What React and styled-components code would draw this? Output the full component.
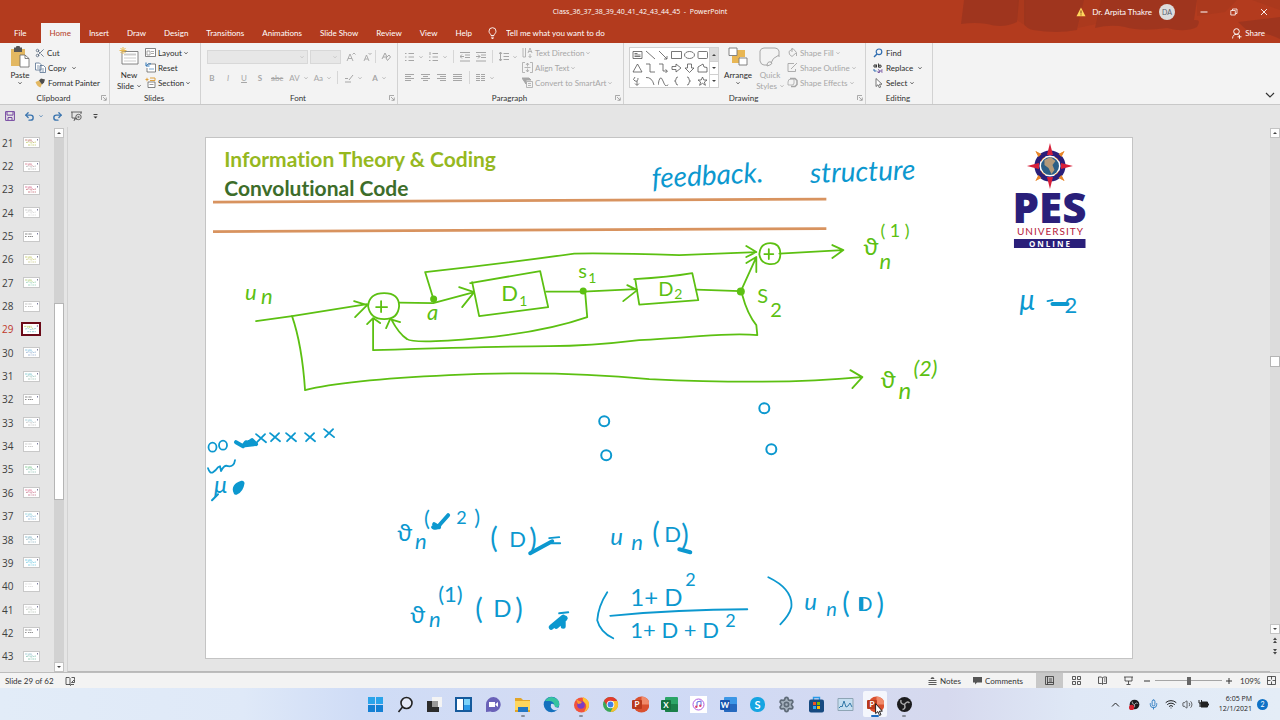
import React from "react";
import styled, { createGlobalStyle } from "styled-components";
import { Scissors, Undo2, Redo2, Wifi, Volume2, Mic, Settings } from "lucide-react";

const color = {
  brand: "#b33b1e",
  ribbon: "#f3f3f3",
  workspace: "#e5e5e5",
  line: "#c8c8c8",
  text: "#333333",
  disabled: "#a6a6a6",
  green: "#5cc012",
  blue: "#0c98cf",
  navy: "#2a1f7a"
};

const GlobalStyle = createGlobalStyle`
  * { box-sizing: border-box; }
  body { margin: 0; background: ${color.workspace}; }
  button, input, select { font: inherit; color: inherit; }
  button { border: 0; padding: 0; background: none; }
  svg { display: block; flex: none; }
`;

const Page = styled.div`
  display: flex;
  flex-direction: column;
  min-height: 100vh;
  color: ${color.text};
  font-family: Lato, "Open Sans", "Noto Sans", sans-serif;
  font-size: 8px;
  line-height: 12px;
`;

const Icon = styled.svg`
  width: ${props => props.w || 12}px;
  height: ${props => props.h || props.w || 12}px;
  fill: none;
  stroke: currentColor;
`;

/* ---------- title bar and tabs ---------- */

const Header = styled.header`
  position: relative;
  background: ${color.brand};
  color: #fff;
`;

const Smudges = styled.svg`
  position: absolute;
  top: 0;
  right: 0;
  width: 330px;
  height: 42px;
`;

const TitleBar = styled.div`
  position: relative;
  display: grid;
  grid-template-columns: 1fr auto 1fr;
  align-items: center;
  height: 23px;
`;

const Title = styled.h1`
  margin: 0;
  font-family: "Open Sans", "Noto Sans", sans-serif;
  font-size: 7px;
  font-weight: 400;
`;

const Account = styled.div`
  display: flex;
  align-items: center;
  justify-content: flex-end;
  padding-right: 9px;
`;

const Warning = styled(Icon)`
  margin-right: 6px;
`;

const Avatar = styled.span`
  width: 16px;
  height: 16px;
  margin: 0 14px 0 7px;
  border-radius: 50%;
  background: #dcdcdc;
  color: #55606c;
  font-size: 7px;
  line-height: 16px;
  text-align: center;
`;

const WindowButton = styled.button`
  display: flex;
  justify-content: center;
  width: 30px;
  &:last-child { width: 14px; margin-left: 8px; }
`;

const TabBar = styled.nav`
  position: relative;
  display: flex;
  align-items: stretch;
  height: 20px;
  padding-right: 15px;
`;

const Tab = styled.button`
  padding: 0 9px;
  background: ${props => (props.$active ? color.ribbon : "none")};
  color: ${props => (props.$active ? color.brand : "#fff")};
  &:first-child { padding: 0 14px; }
`;

const TellMe = styled.label`
  display: flex;
  align-items: center;
  flex: 1;
  gap: 9px;
  padding-left: 7px;
`;

const TellInput = styled.input`
  width: 140px;
  padding: 0;
  border: 0;
  background: none;
  outline: none;
  &::placeholder { color: #fff; opacity: 1; }
`;

const Share = styled.button`
  display: flex;
  align-items: center;
  gap: 3px;
`;

/* ---------- ribbon ---------- */

const Ribbon = styled.div`
  display: flex;
  height: 62px;
  background: ${color.ribbon};
  border-bottom: 1px solid ${color.line};
`;

const Group = styled.section`
  display: flex;
  flex-direction: column;
  flex: none;
  width: ${props => props.$width}px;
  padding-top: 2px;
  border-right: 1px solid #d2d2d2;
`;

const GroupBody = styled.div`
  display: flex;
  flex: 1;
  min-height: 0;
  padding: 0 0 0 ${props => props.$left || 6}px;
`;

const GroupFoot = styled.div`
  display: grid;
  grid-template-columns: 1fr auto 1fr;
  align-items: center;
  height: 12px;
  padding-right: 2px;
  svg { justify-self: end; color: #8a8a8a; }
`;

const GroupName = styled.h2`
  grid-column: 2;
  margin: 0;
  font-size: 8px;
  font-weight: 400;
`;

const Stack = styled.div`
  display: flex;
  flex-direction: column;
  margin-left: ${props => props.$left || 0}px;
  padding-top: ${props => props.$top || 0}px;
`;

const Command = styled.button`
  display: flex;
  align-items: center;
  gap: ${props => props.$gap || 2}px;
  height: 15px;
  white-space: nowrap;
  color: ${props => (props.disabled ? color.disabled : "#2b2b2b")};
`;

const BigCommand = styled.button`
  display: flex;
  flex-direction: column;
  align-items: center;
  width: ${props => props.$width || 28}px;
  padding-top: 1px;
  line-height: 11px;
  color: ${props => (props.disabled ? color.disabled : "#2b2b2b")};
  svg { margin-bottom: 2px; }
`;

const Line = styled.span`
  display: flex;
  align-items: center;
  gap: 3px;
`;

const ToolRow = styled.div`
  display: flex;
  align-items: center;
  gap: ${props => props.$gap}px;
  height: 21px;
  color: ${color.disabled};
`;

const FontSelect = styled.select`
  appearance: none;
  width: ${props => props.$width}px;
  height: 14px;
  margin-right: 1px;
  padding: 0;
  border: 1px solid #cdcdcd;
  border-radius: 0;
  background: #e3e3e3 url("data:image/svg+xml,%3Csvg xmlns='http://www.w3.org/2000/svg' width='4' height='4'%3E%3Cpath d='M.5 1.300 2 2.800 3.500 1.300' fill='none' stroke='%23aaa' stroke-width='.8'/%3E%3C/svg%3E") right 3px center no-repeat;
`;

const FormatButton = styled.button`
  display: flex;
  align-items: center;
  justify-content: center;
  gap: 4px;
  min-width: ${props => props.$width || 10}px;
  color: ${color.disabled};
  font-weight: ${props => (props.$bold ? 700 : 400)};
  font-style: ${props => (props.$italic ? "italic" : "normal")};
  text-decoration: ${props => props.$line || "none"};
`;

const Divider = styled.i`
  width: 1px;
  height: 13px;
  background: #d6d6d6;
`;

const ShapeGallery = styled.div`
  display: flex;
  height: 41px;
  margin-top: 2px;
  border: 1px solid #d0d0d0;
  background: #fff;
`;

const ShapeGrid = styled.div`
  display: grid;
  grid-template-columns: repeat(6, 13px);
  grid-template-rows: repeat(3, 13px);
  place-items: center;
  padding-left: 1px;
`;

const GalleryScroll = styled.div`
  display: grid;
  grid-template-rows: 1fr 1fr 1fr;
  width: 9px;
  border-left: 1px solid #d0d0d0;
`;

const GalleryButton = styled.button`
  display: grid;
  place-items: center;
  background: ${props => (props.disabled ? "#dcdcdc" : "#fff")};
  & + & { border-top: 1px solid #d0d0d0; }
`;

const RibbonEnd = styled.div`
  display: flex;
  flex: 1;
  align-items: flex-end;
  justify-content: flex-end;
  padding: 0 5px 4px 0;
`;

const QuickAccess = styled.div`
  display: flex;
  align-items: center;
  height: 22px;
  padding-left: 5px;
  background: ${color.workspace};
`;

const QuickButton = styled.button`
  display: flex;
  align-items: center;
  justify-content: center;
  gap: 4px;
  width: ${props => props.$width || 20}px;
  color: ${props => props.$tint || "#444"};
`;

/* ---------- workspace ---------- */

const Workspace = styled.main`
  display: flex;
  flex: 1;
  background: ${color.workspace};
`;

const Thumbs = styled.ol`
  display: flex;
  flex-direction: column;
  width: 54px;
  margin: 0;
  padding: 4px 0;
  list-style: none;
`;

const ThumbItem = styled.li`
  display: flex;
  align-items: center;
  flex: 1;
  color: ${props => (props.$active ? "#c0392b" : "#404040")};
  font-family: "Open Sans", "Noto Sans", sans-serif;
  font-size: 10px;
`;

const ThumbButton = styled.button`
  display: flex;
  align-items: center;
  width: 100%;
  text-align: left;
`;

const ThumbNumber = styled.span`
  width: ${props => (props.$active ? 21 : 23)}px;
  padding-left: 2px;
`;

const ThumbFrame = styled.span`
  background: #fff;
  border: ${props => (props.$active ? "2px solid #6b0a18" : "1px solid #c8c8c8")};
  svg { opacity: .7; }
`;

const Scroll = styled.div`
  display: flex;
  flex-direction: column;
  width: 10px;
  padding-top: 1px;
`;

const ScrollButton = styled.button`
  display: grid;
  place-items: center;
  height: ${props => (props.$plain ? 12 : 10)}px;
  border: 1px solid ${props => (props.$plain ? "transparent" : "#c3c3c3")};
  background: ${props => (props.$plain ? "none" : "#fdfdfd")};
`;

const Track = styled.div`
  flex: ${props => props.$grow};
  background: ${props => props.$tone};
`;

const Handle = styled.div`
  flex: ${props => props.$grow || "none"};
  min-height: 11px;
  border: 1px solid #b5b5b5;
  background: #fff;
`;

const Canvas = styled.div`
  flex: 1;
  margin-left: 3px;
  padding: 11px 0 12px;
  border-left: 1px solid #d2d2d2;
  border-bottom: 1px solid #b9b9b9;
`;

const Slide = styled.article`
  position: relative;
  width: 77%;
  margin: 0 auto;
  padding: 6px 18px;
  aspect-ratio: 925 / 520;
  background: #fff;
  box-shadow: 0 0 0 1px #c4c4c4;
`;

const SlideHeading = styled.h2`
  margin: 0;
  color: ${props => props.$tint};
  font-family: Lato, sans-serif;
  font-size: 21px;
  font-weight: 700;
  font-variant-ligatures: none;
  line-height: 29px;
`;

const Ink = styled.svg`
  position: absolute;
  inset: 0;
  width: 100%;
  height: 100%;
  fill: none;
  stroke-linecap: round;
  stroke-linejoin: round;
`;

const InkText = styled.text`
  fill: ${props => props.$tint};
  stroke: none;
  font-family: Lato, "DejaVu Sans", sans-serif;
  font-style: ${props => (props.$italic ? "italic" : "normal")};
  font-size: ${props => props.$size}px;
`;

const LogoName = styled.text`
  fill: ${color.navy};
  font: 800 42px "Open Sans", "Noto Sans", sans-serif;
  text-anchor: middle;
`;

const LogoLine = styled.text`
  font: 400 10px Lato, sans-serif;
  letter-spacing: 1px;
  text-anchor: middle;
`;

const LogoOnline = styled.text`
  fill: #fff;
  font: 700 8px "Open Sans", sans-serif;
  letter-spacing: 2px;
  text-anchor: middle;
`;

/* ---------- status bar and taskbar ---------- */

const Status = styled.footer`
  display: flex;
  align-items: center;
  height: 16px;
  border-top: 1px solid #bdbdbd;
  background: ${color.ribbon};
`;

const StatusButton = styled.button`
  display: flex;
  align-items: center;
  justify-content: center;
  gap: 3px;
  height: 15px;
  min-width: ${props => props.$width || 0}px;
  margin-right: ${props => props.$after || 0}px;
  background: ${props => (props.$active ? "#c8c8c8" : "none")};
`;

const StatusText = styled.span`
  margin: 0 11px 0 5px;
`;

const Spacer = styled.div`
  flex: 1;
`;

const Zoom = styled.input`
  appearance: none;
  width: 67px;
  height: 9px;
  margin: 0 2px;
  background: linear-gradient(#a5a5a5, #a5a5a5) center / 100% 1px no-repeat;
  &::-webkit-slider-thumb {
    appearance: none;
    width: 4px;
    height: 8px;
    background: #666;
  }
`;

const ZoomValue = styled.output`
  width: 33px;
  padding-left: 6px;
`;

const Taskbar = styled.div`
  display: grid;
  grid-template-columns: 1fr 558px 1fr;
  align-items: center;
  height: 32px;
  background: linear-gradient(90deg, #e2ecf8 0, #dfe9f8 19%, #cfdcf6 28%, #d3dbf3 45%, #cfdaf6 52%, #d6d9ee 74%, #dfe8f6 84%, #e4edf7 100%);
`;

const Apps = styled.div`
  grid-column: 2;
  display: flex;
`;

const AppSlot = styled.div`
  display: flex;
  flex: 1;
  justify-content: center;
`;

const AppButton = styled.button`
  position: relative;
  display: grid;
  place-items: center;
  width: 24px;
  height: 26px;
  border-radius: 2px;
  background: ${props => (props.$active ? "#f4f6fc" : "none")};
  &::after {
    content: "";
    position: absolute;
    bottom: 0;
    left: calc(50% - ${props => (props.$active ? 4 : 2)}px);
    width: ${props => (props.$active ? 8 : 4)}px;
    height: 2px;
    border-radius: 1px;
    background: ${props => (props.$active ? "#1c6cc0" : props.$running ? "#8a8f9c" : "transparent")};
  }
`;

const AppLetter = styled.text`
  fill: #fff;
  font: 700 8px Lato, sans-serif;
  text-anchor: middle;
`;

const SkypeLetter = styled(AppLetter)`
  font-size: 11px;
`;

const Pointer = styled.svg`
  position: absolute;
  left: 12px;
  top: 12px;
  width: 8px;
  height: 13px;
`;

const Tray = styled.div`
  display: flex;
  align-items: center;
  justify-content: flex-end;
  gap: 5px;
  padding-right: 12px;
  color: #222;
`;

const TrayItem = styled.span`
  display: grid;
  place-items: center;
  width: 14px;
`;

const Clock = styled.time`
  width: 38px;
  font-family: "Open Sans", "Noto Sans", sans-serif;
  font-size: 7px;
  line-height: 10px;
  text-align: right;
`;

const Badge = styled.span`
  width: 11px;
  height: 11px;
  border-radius: 50%;
  background: #0f72c6;
  color: #fff;
  font-size: 7px;
  line-height: 11px;
  text-align: center;
`;

const Caret = ({ w = 4 }) => (
  <Icon w={w} viewBox="0 0 4 4"><path d="M.5 1.3 2 2.8 3.5 1.3" strokeWidth=".8" /></Icon>
);

const Launcher = () => (
  <Icon w={6} viewBox="0 0 6 6"><path d="M.5 5V.5H5M2 2l3 3M5.300 2.500v2.800H2.500" strokeWidth=".7" /></Icon>
);

const Triangle = ({ up }) => (
  <Icon w={6} viewBox="0 0 6 6"><path d={up ? "M1 4h4L3 2z" : "M1 2h4L3 4z"} fill="#444" stroke="none" /></Icon>
);

const RibbonGroup = ({ name, width, left, launcher, children }) => (
  <Group $width={width} aria-label={name}>
    <GroupBody $left={left}>{children}</GroupBody>
    <GroupFoot><GroupName>{name}</GroupName>{launcher && <Launcher />}</GroupFoot>
  </Group>
);

const tabs = ["File", "Home", "Insert", "Draw", "Design", "Transitions", "Animations", "Slide Show", "Review", "View", "Help"];

const TopBar = () => (
  <Header>
    <Smudges viewBox="0 0 330 42" aria-hidden="true">
      <path fill="#98341f" opacity=".75" d="M14 0h55l-2 22q-14 7-30 2-12-2-26 0zM74 0h60l-7 30q-20 4-44 0-6-1-9-6zM151 0h96l-3 20q8-1 3 7-12 6-30 1-26 4-42-1-14-3-30 1zM288 22l42-5v22q-16-8-30-6z" />
      <path fill="#98341f" opacity=".3" d="M67 0h9v26l-9-6zM134 0h18l-6 24-18 4zM247 0h40l-12 12-28 4zM302 0h28v10z" />
    </Smudges>
    <TitleBar>
      <span />
      <Title>Class_36_37_38_39_40_41_42_43_44_45&nbsp; -&nbsp; PowerPoint</Title>
      <Account>
        <Warning w={10} viewBox="0 0 10 10"><path d="M5 .6 9.500 9.300H.5z" fill="#ffd65c" stroke="none" /><path d="M5 3.500v3M5 7.400v1" stroke="#7a3b10" /></Warning>
        Dr. Arpita Thakre
        <Avatar>DA</Avatar>
        <WindowButton aria-label="Minimize"><Icon w={8} viewBox="0 0 8 8"><path d="M.5 4h7" /></Icon></WindowButton>
        <WindowButton aria-label="Restore"><Icon w={8} viewBox="0 0 8 8"><path d="M.8 2.500h4.500v4.500H.8zM2.500 2.500V1H7v4.500H5.300" strokeWidth=".8" /></Icon></WindowButton>
        <WindowButton aria-label="Close"><Icon w={8} viewBox="0 0 8 8"><path d="m1 1 6 6M7 1 1 7" strokeWidth=".9" /></Icon></WindowButton>
      </Account>
    </TitleBar>
    <TabBar>
      {tabs.map(name => <Tab key={name} $active={name === "Home"}>{name}</Tab>)}
      <TellMe>
        <Icon w={9} h={12} viewBox="0 0 9 12"><path d="M3 8.500C3 7 1 6.400 1 4.200a3.500 3.500 0 0 1 7 0C8 6.400 6 7 6 8.500zM3.200 10.200h2.600M3.600 11.500h1.800" strokeWidth=".9" /></Icon>
        <TellInput aria-label="Tell me what you want to do" placeholder="Tell me what you want to do" />
      </TellMe>
      <Share>
        <Icon w={10} h={11} viewBox="0 0 10 11"><circle cx="4.500" cy="3.500" r="2.800" /><path d="M.6 10.500c0-3 1.600-4.200 3.900-4.200 1 0 1.700.2 2.300.6M7.500 6.800v4M5.500 8.800h4" strokeWidth=".9" /></Icon>
        Share
      </Share>
    </TabBar>
  </Header>
);

const ClipboardGroup = () => (
  <RibbonGroup name="Clipboard" width={110} left={6} launcher>
    <BigCommand $width={28}>
      <Icon w={20} h={22} viewBox="0 0 20 22">
        <path d="M1 3h14v17H1z" fill="#e3b862" stroke="none" />
        <path d="M4 1.500h2a2 2 0 0 1 4 0h2V6H4z" fill="#555" stroke="none" />
        <path d="M10 9h5l4 3.500V21h-9z" fill="#fff" stroke="#666" strokeWidth=".8" />
        <path d="M15 9v3.500h4" stroke="#666" strokeWidth=".8" />
      </Icon>
      Paste
      <Caret />
    </BigCommand>
    <Stack $left={1}>
      <Command><Scissors size={10} strokeWidth={2} color="#5b6b80" />Cut</Command>
      <Command>
        <Icon w={11} viewBox="0 0 11 11"><path d="M.5 1h4l1.500 1.500V8H.5zM5 3.500h3.500l2 2V10.500H5z" fill="#fff" stroke="#55708f" strokeWidth=".8" /><path d="M2 4h2M2 6h2M6.500 7h2.500M6.500 9h2.500" stroke="#55708f" strokeWidth=".7" /></Icon>
        Copy&nbsp;&nbsp;<Caret />
      </Command>
      <Command>
        <Icon w={11} viewBox="0 0 11 11"><path d="M.5 5 4 3.500 7 7 5.500 10.500Q2 9.500.5 5z" fill="#e3b862" stroke="none" /><path d="m4 3.500 2-2 4 1-1 3-2 2z" fill="#4c4c4c" stroke="none" /></Icon>
        Format Painter
      </Command>
    </Stack>
  </RibbonGroup>
);

const SlidesGroup = () => (
  <RibbonGroup name="Slides" width={91} left={5}>
    <BigCommand $width={28}>
      <Icon w={20} h={22} viewBox="0 0 20 22">
        <path d="M3 5.500h16v12.500H3z" fill="#fff" stroke="#777" strokeWidth=".9" />
        <path d="M5 8.500h12" stroke="#ccc" strokeWidth="2" /><path d="M5 12h12M5 15h12" stroke="#ccc" />
        <path d="M4 1v7M.5 4.500h7M1.500 2l5 5M6.500 2l-5 5" stroke="#e9b94e" />
      </Icon>
      New
      <Line>Slide <Caret /></Line>
    </BigCommand>
    <Stack $left={2}>
      <Command>
        <Icon w={11} viewBox="0 0 11 11"><path d="M.5 1.500h10v8H.5z" fill="#fff" stroke="#666" strokeWidth=".8" /><path d="M2 4h3v4H2zM6 4.500h3M6 6.500h3" stroke="#888" strokeWidth=".7" /></Icon>
        Layout <Caret />
      </Command>
      <Command>
        <Icon w={11} viewBox="0 0 11 11"><path d="M3 2h7.500v8H2V6" fill="#fff" stroke="#666" strokeWidth=".8" /><path d="M1 .5v3.500h3.500M1.200 3.800Q3 1 6 1.800" stroke="#2f75b5" /><path d="M4 7h5" stroke="#7ba7d0" /></Icon>
        Reset
      </Command>
      <Command>
        <Icon w={11} viewBox="0 0 11 11"><path d="M3 5h7v5.500H3z" fill="#fff" stroke="#666" strokeWidth=".8" /><path d="M5 3.500H10V1H5M.5 2.500h3M2 .8v3.500" stroke="#e0a13c" /><path d="M4.500 7.500h4" stroke="#999" /></Icon>
        Section <Caret />
      </Command>
    </Stack>
  </RibbonGroup>
);

const FontGroup = () => (
  <RibbonGroup name="Font" width={197} left={6} launcher>
    <Stack $top={1}>
      <ToolRow $gap={1}>
        <FontSelect $width={101} aria-label="Font" disabled />
        <FontSelect $width={31} aria-label="Font size" disabled />
        <FormatButton disabled $width={16}><Icon w={10} viewBox="0 0 10 10"><path d="M1 9 4 2l3 7M2 6.500h4M6.500 2.500 8 1l1.500 1.500" strokeWidth=".9" /></Icon></FormatButton>
        <FormatButton disabled $width={14}><Icon w={10} viewBox="0 0 10 10"><path d="M2 9l2.500-6L7 9M3 7h3M6.500 1 8 2.500 9.500 1" strokeWidth=".9" /></Icon></FormatButton>
        <Divider />
        <FormatButton disabled $width={18}><Icon w={10} viewBox="0 0 10 10"><path d="M1 7 4 1l2 4M2 5h3M5 6l3-3 1.500 2-3 3.500z" /></Icon></FormatButton>
      </ToolRow>
      <ToolRow $gap={6}>
        <FormatButton disabled $bold>B</FormatButton>
        <FormatButton disabled $italic>I</FormatButton>
        <FormatButton disabled $line="underline">U</FormatButton>
        <FormatButton disabled $bold>S</FormatButton>
        <FormatButton disabled $line="line-through">abc</FormatButton>
        <FormatButton disabled>AV <Caret /></FormatButton>
        <FormatButton disabled>Aa <Caret /></FormatButton>
        <Divider />
        <FormatButton disabled><Icon w={10} viewBox="0 0 10 10"><path d="M1 5.500h3M5 7l4-5M1 9h6" /></Icon> <Caret /></FormatButton>
        <FormatButton disabled $bold $width={22}>A <Caret /></FormatButton>
      </ToolRow>
    </Stack>
  </RibbonGroup>
);

const ListGlyph = ({ d }) => <Icon w={10} viewBox="0 0 10 10"><path d={d} strokeWidth="1" /></Icon>;

const ParagraphGroup = () => (
  <RibbonGroup name="Paragraph" width={226} left={7} launcher>
    <Stack $top={1}>
      <ToolRow $gap={6}>
        <FormatButton disabled><ListGlyph d="M0 1.500h1.500M0 5h1.500M0 8.500h1.500M3.500 1.500H9M3.500 5H9M3.500 8.500H9" /><Caret /></FormatButton>
        <FormatButton disabled><ListGlyph d="M1 0v3M0 5h1.500M0 8.500h1.500M3.500 1.500H9M3.500 5H9M3.500 8.500H9" /><Caret /></FormatButton>
        <Divider />
        <FormatButton disabled><ListGlyph d="M0 .5h10M5 3h5M5 5.500h5M0 9h10M4 4.500H0M2 2.500l-2 2 2 2" /></FormatButton>
        <FormatButton disabled><ListGlyph d="M0 .5h10M5 3h5M5 5.500h5M0 9h10M0 4.500h4M2 2.500l2 2-2 2" /></FormatButton>
        <Divider />
        <FormatButton disabled><ListGlyph d="M1.500 0v9M0 2l1.500-2L3 2M0 7l1.500 2L3 7M4.500 1.500H10M4.500 4.500H10M4.500 7.500H10" /><Caret /></FormatButton>
      </ToolRow>
      <ToolRow $gap={6}>
        <FormatButton disabled><ListGlyph d="M0 1.500h9M0 3.500h6M0 5.500h9M0 7.500h6" /></FormatButton>
        <FormatButton disabled><ListGlyph d="M0 1.500h9M2 3.500h5M0 5.500h9M2 7.500h5" /></FormatButton>
        <FormatButton disabled><ListGlyph d="M0 1.500h9M3 3.500h6M0 5.500h9M3 7.500h6" /></FormatButton>
        <FormatButton disabled><ListGlyph d="M0 1.500h9M0 3.500h9M0 5.500h9M0 7.500h9" /></FormatButton>
        <Divider />
        <FormatButton disabled><ListGlyph d="M0 1.500h4M5 1.500h4M0 3.500h4M5 3.500h4M0 5.500h4M5 5.500h4M0 7.500h4M5 7.500h4" /><Caret /></FormatButton>
      </ToolRow>
    </Stack>
    <Stack $left={5}>
      <Command disabled>
        <Icon w={11} viewBox="0 0 11 11"><path d="M1 1v9M3.500 1v9M1 10h2.500M6 6l2-5 2 5M6.500 4.500h3M8 7v3.500M6.500 9 8 10.500 9.500 9" strokeWidth=".8" /></Icon>
        Text Direction <Caret />
      </Command>
      <Command disabled>
        <Icon w={11} viewBox="0 0 11 11"><path d="M3 .5H.5v10H3M8 .5h2.500v10H8M5.500 1v3.500M4 3l1.500-2L7 3M5.500 10V6.500M4 8l1.500 2L7 8M2.500 5.500h6" strokeWidth=".8" /></Icon>
        Align Text <Caret />
      </Command>
      <Command disabled>
        <Icon w={11} viewBox="0 0 11 11"><path d="M0 1h7l2 2H4v4z" fill="currentColor" /><path d="M4.500 4.500h6v6h-6zM6 6.500h3M6 8.500h3" strokeWidth=".8" /></Icon>
        Convert to SmartArt <Caret />
      </Command>
    </Stack>
  </RibbonGroup>
);

const shapes = [
  "M1 1.500h9v7H1zM2.500 3.500h3M2.500 5h6M2.500 6.500h6", "M1 1l9 8", "M1 1l8 8M9 6v3H6", "M.5 1.500h10v7H.5z", "M.5 5a5 3.500 0 1 0 10 0 5 3.500 0 1 0-10 0z", "M2 1.500h7.500q1 0 1 1v5q0 1-1 1H2q-1 0-1-1v-5q0-1 1-1z",
  "M5.500 1 10 9H1z", "M1 1h4v8h5", "M1 1h4v7h4M7.500 6.500 9.500 8 7.500 10", "M1 3.500h4V1l5 4-5 4V6.500H1z", "M3.500 1h4v4H10L5.500 9.500 1 5h2.500z", "M1 9V4l5-3 1 3 3 .5V9z",
  "M3 1Q0 4 3 5t3-3M5 5v4M3 7.500 5 9.500 7 7.500", "M1 1.500Q7 1 9 9", "M0 9Q2-3 5 5t5 3.500", "M7 1Q5 1 5 3t-1.500 2Q5 5 5 7t2 2", "M3 1q2 0 2 2t1.500 2Q5 5 5 7T3 9", "M5.500 1l1.300 3h3.200L7.400 6l1 3.300-2.900-2-2.900 2 1-3.300L1 4h3.200z"
];

const DrawingGroup = () => (
  <RibbonGroup name="Drawing" width={242} left={5} launcher>
    <ShapeGallery>
      <ShapeGrid>
        {shapes.map(d => <Icon key={d} w={11} h={10} viewBox="0 0 11 10"><path d={d} stroke="#555" strokeWidth=".8" /></Icon>)}
      </ShapeGrid>
      <GalleryScroll>
        <GalleryButton disabled aria-label="Previous shapes"><Triangle up /></GalleryButton>
        <GalleryButton aria-label="Next shapes"><Triangle /></GalleryButton>
        <GalleryButton aria-label="More shapes"><Triangle /></GalleryButton>
      </GalleryScroll>
    </ShapeGallery>
    <BigCommand $width={38}>
      <Icon w={20} h={22} viewBox="0 0 20 22">
        <path d="M9 4h8v7H9zM4 10h8v7H4z" fill="#e8b653" stroke="none" />
        <path d="M1 2h8v7.500H1zM11 12h8v7h-8z" fill="#fff" stroke="#777" strokeWidth=".9" />
      </Icon>
      Arrange
      <Caret />
    </BigCommand>
    <BigCommand $width={26} disabled>
      <Icon w={22} h={22} viewBox="0 0 22 22"><path d="M8 19H5q-3 0-4-4V5q1-3 4-3h11q3 0 4 3v6" /><path d="M20 9q-7 3-8 8M8 20q0-5 4-4 3 2-4 4z" /></Icon>
      Quick
      <Line>Styles <Caret /></Line>
    </BigCommand>
    <Stack $left={4}>
      <Command disabled>
        <Icon w={11} viewBox="0 0 11 11"><path d="M2 4.500 6 1.500l3.500 4L5 9.500Q1.500 8 2 4.500zM5 1v4M9.500 6v3" strokeWidth=".9" /></Icon>
        Shape Fill <Caret />
      </Command>
      <Command disabled>
        <Icon w={11} viewBox="0 0 11 11"><path d="M7 1.500H1v8h7.500V7M4 7l6-6" strokeWidth=".9" /></Icon>
        Shape Outline <Caret />
      </Command>
      <Command disabled>
        <Icon w={11} viewBox="0 0 11 11"><path d="M3 1.500h5l2 2v4l-2 2H4" strokeWidth="1.500" /><path d="M1 5q0-3 3-3h3v4q0 2-2 2H1z" strokeWidth=".8" /></Icon>
        Shape Effects <Caret />
      </Command>
    </Stack>
  </RibbonGroup>
);

const EditingGroup = () => (
  <RibbonGroup name="Editing" width={67} left={7}>
    <Stack>
      <Command $gap={3}>
        <Icon w={10} viewBox="0 0 10 10"><circle cx="6" cy="3.800" r="2.800" stroke="#2f6db0" strokeWidth="1.200" /><path d="M4 6 1 9" stroke="#2f6db0" strokeWidth="1.400" /></Icon>
        Find
      </Command>
      <Command $gap={3}>
        <Icon w={10} viewBox="0 0 10 10"><circle cx="2" cy="3" r="1.200" /><path d="M3.500 1.500v3M5.500.5v4" strokeWidth=".9" /><circle cx="7" cy="3.200" r="1.200" /><path d="M1 6v2h2.500" stroke="#2f6db0" /><path d="M5 6.500q2 0 1.500 3H5V8M9.700 7q-2-.5-2 1t2 1" stroke="#6b4a9a" strokeWidth=".9" /></Icon>
        Replace&nbsp; <Caret />
      </Command>
      <Command $gap={3}>
        <Icon w={10} viewBox="0 0 10 10"><path d="M3 .5v8l2-1.800L6.300 9.700l1.300-.6L6.500 6.200H9z" fill="#fff" stroke="#555" strokeWidth=".8" /></Icon>
        Select <Caret />
      </Command>
    </Stack>
  </RibbonGroup>
);

/* ---------- slide list ---------- */

const thumbTints = {
  21: ["#a03a2a", "#a8b62c"], 22: ["#c0405a", "#999"], 23: ["#c42a5a", "#b03040"], 24: ["#aaa", "#ccc"],
  25: ["#333"], 26: ["#a9b52a", "#b8b860"], 27: ["#8fb740", "#6ac0a0"], 28: ["#999"], 29: ["#9ab92c", "#5cb6c0"],
  30: ["#4aa3d0", "#7090c0"], 31: ["#3fa9b5", "#80b0a0"], 32: ["#333"], 33: ["#70b0c0", "#aaa"], 34: ["#aaa"],
  35: ["#3fae5a", "#70b0a0"], 36: ["#d23a6a", "#b04060"], 37: ["#58b8c8", "#60a0d0"], 38: ["#4090a8", "#70a0b0"],
  39: ["#2fb0d8", "#40b8d8"], 40: ["#ccc"], 41: ["#bbb", "#a0b0a0"], 42: ["#444"], 43: ["#68a8b8", "#50b090"]
};

const SlideList = () => (
  <Thumbs>
    {Object.entries(thumbTints).map(([number, [first, second]]) => {
      const active = number === "29";
      return (
        <ThumbItem key={number} $active={active}>
          <ThumbButton aria-label={`Slide ${number}`}>
            <ThumbNumber $active={active}>{number}</ThumbNumber>
            <ThumbFrame $active={active}>
              <Icon w={active ? 16 : 15} h={active ? 10 : 9} viewBox="0 0 15 9">
                <path d="M1 2h7" stroke={first} strokeWidth=".8" strokeDasharray="2 .5 1 .4" />
                <path d="M13.500 1v1.500" stroke="#447" />
                {second && <path d="M2 4.500l3-.5 2 1 5-1M4 7h8" stroke={second} strokeWidth=".8" strokeDasharray="2 .6 1 .8" />}
                {second && <path d="M4 3h4l2 2" stroke={first} strokeWidth=".7" strokeDasharray="1 .6" />}
                {!second && <path d="M1 4.500h1.500M4 4.500h5" stroke={first} strokeWidth=".8" strokeDasharray="1.500 .5" />}
              </Icon>
            </ThumbFrame>
          </ThumbButton>
        </ThumbItem>
      );
    })}
  </Thumbs>
);

/* ---------- slide ink, in slide canvas units ---------- */

const diagram = [
  "M257 321 293 316 368 304M355 301 368 305 356 317",
  "M369 306q1-13 16-13t15 13q-1 13-15 13t-16-13M377 307h11M382 301v11",
  "M400 302.500 434 303 475 292M460 287 475 292 463 307",
  "M471 283 541 271 549 307 480 316 473 282",
  "M434 298 426 272Q500 264 575 253.500 620 253 680 255L757 252M747 246 757 252 747 257",
  "M547 291.500H584L637 289M628 285 638 290 624 301",
  "M586 293 588 317Q545 332 480 338T408 339Q400 334 392 319M387 328 391 319 401 322",
  "M635 279 Q670 277 693 273L699 300 640 304.500 636 279",
  "M697 289.500 741 291M742 290 757 257M747 263 757 257V272",
  "M743 295Q748 314 757 325L758 335Q740 333 700 336T640 340Q590 346 550 346T374 350V319M368 324 374 318 381 323",
  "M293 316Q303 345 306 390 345 380 450 375T650 379Q780 385 862 377M851 370 863 377 853 388",
  "M760 254q1-11 11-11t10 11-11 10q-9-1-10-10M765 254h9M769.500 249v10",
  "M780 253.500 843 250M833 245 844 250 833 258"
];

const labels = [
  { x: 246, y: 300, size: 22, text: "u", tint: color.green, italic: true },
  { x: 262, y: 304, size: 22, text: "n", tint: color.green, italic: true },
  { x: 502, y: 301, size: 22, text: "D", tint: color.green },
  { x: 520, y: 306, size: 14, text: "1", tint: color.green },
  { x: 428, y: 320, size: 22, text: "a", tint: color.green, italic: true },
  { x: 579, y: 278, size: 20, text: "s", tint: color.green },
  { x: 589, y: 283, size: 14, text: "1", tint: color.green },
  { x: 659, y: 296, size: 20, text: "D", tint: color.green },
  { x: 675, y: 299, size: 14, text: "2", tint: color.green },
  { x: 758, y: 303, size: 20, text: "S", tint: color.green },
  { x: 771, y: 317, size: 20, text: "2", tint: color.green },
  { x: 864, y: 255, size: 24, text: "ϑ", tint: color.green },
  { x: 881, y: 237, size: 18, text: "( 1 )", tint: color.green },
  { x: 880, y: 269, size: 22, text: "n", tint: color.green, italic: true },
  { x: 881, y: 388, size: 24, text: "ϑ", tint: color.green },
  { x: 899, y: 399, size: 24, text: "n", tint: color.green, italic: true },
  { x: 914, y: 376, size: 22, text: "(2)", tint: color.green, italic: true },
  { x: 653, y: 188, size: 28, text: "feedback.", tint: color.blue, italic: true, turn: -3 },
  { x: 811, y: 183, size: 28, text: "structure", tint: color.blue, italic: true, turn: -2 },
  { x: 1020, y: 310, size: 28, text: "μ", tint: color.blue, italic: true },
  { x: 1065, y: 313, size: 22, text: "2", tint: color.blue },
  { x: 215, y: 493, size: 24, text: "μ", tint: color.blue, italic: true },
  { x: 398, y: 541, size: 24, text: "ϑ", tint: color.blue },
  { x: 416, y: 549, size: 22, text: "n", tint: color.blue, italic: true },
  { x: 425, y: 526, size: 22, text: "(", tint: color.blue },
  { x: 457, y: 524, size: 18, text: "2", tint: color.blue },
  { x: 475, y: 525, size: 22, text: ")", tint: color.blue },
  { x: 491, y: 548, size: 28, text: "(", tint: color.blue },
  { x: 510, y: 547, size: 22, text: "D", tint: color.blue },
  { x: 530, y: 549, size: 28, text: ")", tint: color.blue },
  { x: 611, y: 545, size: 24, text: "u", tint: color.blue, italic: true },
  { x: 632, y: 550, size: 22, text: "n", tint: color.blue, italic: true },
  { x: 653, y: 543, size: 28, text: "(", tint: color.blue },
  { x: 665, y: 542, size: 22, text: "D", tint: color.blue },
  { x: 682, y: 545, size: 28, text: ")", tint: color.blue },
  { x: 411, y: 623, size: 24, text: "ϑ", tint: color.blue },
  { x: 430, y: 627, size: 22, text: "n", tint: color.blue, italic: true },
  { x: 439, y: 602, size: 22, text: "(1)", tint: color.blue },
  { x: 476, y: 619, size: 28, text: "(", tint: color.blue },
  { x: 494, y: 617, size: 24, text: "D", tint: color.blue },
  { x: 516, y: 619, size: 28, text: ")", tint: color.blue },
  { x: 631, y: 606, size: 24, text: "1+ D", tint: color.blue },
  { x: 686, y: 586, size: 18, text: "2", tint: color.blue },
  { x: 631, y: 638, size: 22, text: "1+ D + D", tint: color.blue },
  { x: 726, y: 627, size: 18, text: "2", tint: color.blue },
  { x: 805, y: 610, size: 24, text: "u", tint: color.blue, italic: true },
  { x: 827, y: 616, size: 20, text: "n", tint: color.blue, italic: true },
  { x: 843, y: 613, size: 28, text: "(", tint: color.blue },
  { x: 858, y: 611, size: 20, text: "D", tint: color.blue },
  { x: 877, y: 614, size: 28, text: ")", tint: color.blue }
];

const crosses = [[262, 438], [276, 437], [292, 437], [311, 437], [330, 433]];
const states = [[605, 421], [607, 455], [765, 408], [772, 449]];

const Logo = () => (
  <g stroke="none">
    <path fill="#e8872b" d="M1036 151l14 9 15-9-9 15 9 15-15-9-14 9 8-15z" />
    <circle cx="1050.500" cy="166" r="13" stroke="#2a1f7a" strokeWidth="5" />
    <path fill="#e8872b" d="M1036 151l6 3-3 3zM1065 151l-6 3 3 3zM1036 181l6-3-3-3zM1065 181l-6-3 3-3z" />
    <path fill="#d6203a" d="M1050.500 143l3 12h-6zM1050.500 189l3-12h-6zM1027.500 166l12-3v6zM1073.500 166l-12-3v6z" />
    <circle cx="1050.500" cy="166" r="10" fill="#fff" />
    <circle cx="1050.500" cy="166" r="9" fill="#2c5f86" />
    <path fill="#b39a7a" d="M1045 160l6-3 5 4-3 4 2 5-3 4-3-6-4-3z" />
    <LogoName x="1050" y="223">PES</LogoName>
    <LogoLine x="1051" y="235" fill="#b5203c">UNIVERSITY</LogoLine>
    <path fill={color.navy} d="M1014.500 239h71.500v9h-71.500z" />
    <LogoOnline x="1051" y="247">ONLINE</LogoOnline>
  </g>
);

const SlideInk = () => (
  <Ink viewBox="207 138 925 520" role="img" aria-label="Feedback structure of a convolutional encoder">
    <path d="M214 202 827 199M214 231.500 827 228.500" stroke="#d8935f" strokeWidth="2.700" strokeLinecap="butt" />
    <g stroke={color.green} strokeWidth="1.800">
      {diagram.map(d => <path key={d} d={d} />)}
    </g>
    <g fill={color.green}>
      <circle cx="434.500" cy="299" r="3.500" />
      <circle cx="584" cy="291" r="3.500" />
      <circle cx="741.500" cy="291.500" r="4" />
    </g>
    <g stroke={color.blue} strokeWidth="2">
      {states.map(([x, y]) => <ellipse key={`${x}-${y}`} cx={x} cy={y} rx="5" ry="5" />)}
      {crosses.map(([x, y]) => <path key={x} d={`M${x - 5} ${y - 4}l10 8M${x - 4} ${y + 4}l8-8`} strokeWidth="1.800" />)}
      <ellipse cx="213.500" cy="447" rx="4" ry="4.500" strokeWidth="1.800" />
      <ellipse cx="224" cy="445" rx="4" ry="4.500" strokeWidth="1.800" />
      <path d="M237 442l7 4 3-4 8 2-9 1 7-5 4 4" strokeWidth="4" />
      <path d="M209 468q2 6 5 4t5-5l2-1 1 5q3-7 7-5 6 1 7-6" strokeWidth="1.800" />
      <path d="M237 492q-3-6 6-9-1 7-6 9" strokeWidth="5" />
      <path d="M213 500l6-6" strokeWidth="2" />
      <path d="M1048 301l5-1" strokeWidth="1.800" />
      <path d="M1053 304h15" strokeWidth="4" />
      <path d="M434 527q4 2 7-3l8-9M435 524l5 3" strokeWidth="4" />
      <path d="M531 553l22-12" strokeWidth="4" />
      <path d="M550 538l10-1M552 543h9" strokeWidth="1.800" />
      <path d="M680 549l11 3" strokeWidth="4" />
      <path d="M552 627l12-10v9M557 626l9-8" strokeWidth="5" />
      <path d="M560 613l9-1" strokeWidth="2" />
      <path d="M611 615.500Q680 609 748 609" strokeWidth="1.800" />
      <path d="M608 592q-9 14-10 28 3 12 16 18M769 577q25 12 23 30-2 8-11 17" strokeWidth="1.800" />
      <path d="M862 599v9" strokeWidth="4" />
    </g>
    {labels.map(({ x, y, size, text, tint, italic, turn }) => (
      <InkText key={`${x}-${y}`} x={x} y={y} $size={size} $tint={tint} $italic={italic} transform={turn ? `rotate(${turn} ${x} ${y})` : undefined}>{text}</InkText>
    ))}
    <Logo />
  </Ink>
);

/* ---------- taskbar ---------- */

const Tile = ({ letter, back, front }) => (
  <g>
    <rect x="4" y="1" width="13" height="15" rx="1" fill={back} />
    <rect x="4" y="8" width="13" height="8" rx="1" fill={front} opacity=".7" />
    <rect x="0" y="4" width="10" height="10" rx="1" fill={front} />
    <AppLetter x="5" y="12">{letter}</AppLetter>
  </g>
);

const SlidesTile = () => (
  <g>
    <circle cx="9.500" cy="8.500" r="8" fill="#d9502f" />
    <path d="M9.500.5a8 8 0 0 1 8 8h-8z" fill="#f08a6a" />
    <rect x="0" y="4" width="10" height="9" rx="1" fill="#b93a1c" />
    <AppLetter x="5" y="11">P</AppLetter>
  </g>
);

const Obs = () => (
  <g>
    <circle cx="8.500" cy="8.500" r="7.500" fill="#1c1c1e" />
    <path d="M8.500 8.500Q4 8 5 4M8.500 8.500Q11 4.500 13.500 7M8.500 8.500Q10 13 6.500 13.500" stroke="#aaa" strokeWidth="1.500" fill="none" />
  </g>
);

const apps = [
  { name: "Start", art: <g><path fill="#2ba4ea" d="M1 1h7v7H1zM9 1h7v7H9z" /><path fill="#1480d4" d="M1 9h7v7H1zM9 9h7v7H9z" /></g> },
  { name: "Search", art: <g fill="none" stroke="#222" strokeWidth="1.600"><circle cx="9.500" cy="7" r="5.500" fill="#e6ebf8" /><path d="m5.500 11-4 5" /></g> },
  { name: "Task view", art: <g><path fill="#f4f4f4" d="M6 1h10v10H6z" /><path fill="#9a9a9a" d="M6 5h6v6H6z" /><path fill="#2c2c2c" d="M1 5h5v6h7v5H1z" /></g> },
  { name: "Widgets", art: <g><path fill="#155a9c" d="M0 1h17v15H0z" /><path fill="#fff" d="M2 3h6v11H2z" /><path fill="#7cd3fa" d="M9 3h6v6H9z" /><path fill="#2a9ae8" d="M9 9h6v5H9z" /></g> },
  { name: "Chat", art: <g><path fill="#6a62b8" d="M8.500 1a7.500 7.500 0 1 1-3 14.500L1 16V8.500A7.500 7.500 0 0 1 8.500 1z" /><path fill="#fff" d="M4 6h6v5H4zM10.500 8 13 6v5l-2.500-2z" /></g> },
  { name: "Explorer", running: true, art: <g><path fill="#e2a528" d="M1 2h6l2 2h7v12H1z" /><path fill="#ffd65c" d="M1 5h15v9H1z" /><path fill="#2377c4" d="M4 11h10v5H4z" /></g> },
  { name: "Edge", art: <g><circle cx="8.500" cy="8.500" r="7.800" fill="#1470bd" /><path fill="#37c3a0" d="M2 5Q6-1 12 2q5 2 4 8-1 2-5 1 1-5-4-6Q4 5 2 5z" /><path fill="#d4dcf4" d="M8 8q3-1 4 3l4 1q-3 4-7 1-2-2-1-5z" /></g> },
  { name: "Firefox", running: true, art: <g><circle cx="8.500" cy="9" r="7.500" fill="#f2533c" /><path fill="#ffc130" d="M10 1q7 3 6 9-1 4-5 6 4-6 1-9-3-2-2-6z" /><circle cx="8" cy="9" r="3.800" fill="#7b3fc4" /><path fill="#ff9a2e" d="M3 3q2 2 6 3-1 2-4 2z" /></g> },
  { name: "Chrome", art: <g><circle cx="8.500" cy="8.500" r="7.500" fill="#3aa757" /><path fill="#e33b2e" d="M2 5a7.500 7.500 0 0 1 13.300 0H8.500L5.500 10z" /><path fill="#fbc02d" d="M15.300 5A7.500 7.500 0 0 1 8.500 16l3-6-3-5z" /><circle cx="8.500" cy="8.500" r="3.800" fill="#fff" /><circle cx="8.500" cy="8.500" r="2.900" fill="#3f7fe8" /></g> },
  { name: "PowerPoint", art: <SlidesTile /> },
  { name: "Excel", art: <Tile letter="X" back="#2ba567" front="#14713f" /> },
  { name: "iTunes", art: <g><path fill="#fff" d="M0 0h17v17H0z" /><circle cx="8.500" cy="8.500" r="5.500" fill="none" stroke="#b05ae0" /><path d="M7 10.500V6l4-1v4.500" fill="none" stroke="#5a6ae0" /><circle cx="6.300" cy="10.700" r="1.200" fill="#e0406a" /><circle cx="10.300" cy="9.700" r="1.200" fill="#e0406a" /></g> },
  { name: "Word", art: <Tile letter="W" back="#3c97e6" front="#1b55ae" /> },
  { name: "Skype", art: <g><rect x="1" y="1" width="15" height="15" rx="7" fill="#16a5e2" /><SkypeLetter x="8.500" y="12.500">S</SkypeLetter></g> },
  { name: "Settings", art: null },
  { name: "Store", art: <g><path d="M5.500 4V1.500h6V4" fill="none" stroke="#2a9ae8" strokeWidth="1.400" /><rect x="1" y="3.500" width="15" height="13" rx="2" fill="#174a80" /><path fill="#f25022" d="M5 6h3v3H5z" /><path fill="#7fba00" d="M9 6h3v3H9z" /><path fill="#35a8ee" d="M5 10h3v3H5z" /><path fill="#ffb900" d="M9 10h3v3H9z" /></g> },
  { name: "Monitor", art: <g><path fill="#c5def0" stroke="#8ea5b5" d="M1 2.500h15v12H1z" /><path d="M2 12l2-2 1 1 2-6 2 6 2-1 2-3 2 4" fill="none" stroke="#3479a8" /></g> },
  { name: "PowerPoint window", active: true, art: <SlidesTile /> },
  { name: "OBS", running: true, art: <Obs /> }
];

const BottomBar = () => (
  <Taskbar>
    <Apps>
      {apps.map(app => (
        <AppSlot key={app.name}>
          <AppButton aria-label={app.name} $active={app.active} $running={app.running}>
            {app.art
              ? <svg width="17" height="17" viewBox="0 0 17 17">{app.art}</svg>
              : <Settings size={17} strokeWidth={2.5} color="#5f6b78" fill="#a8b4c0" />}
            {app.active && <Pointer viewBox="0 0 8 13"><path d="M.6.6v10l2.300-2 1.600 3.800 1.500-.7-1.600-3.500h3z" fill="#fff" stroke="#111" strokeWidth=".9" /></Pointer>}
          </AppButton>
        </AppSlot>
      ))}
    </Apps>
    <Tray>
      <TrayItem><Icon w={9} viewBox="0 0 9 9"><path d="M1 6.500 4.500 3 8 6.500" /></Icon></TrayItem>
      <TrayItem><svg width="11" height="11" viewBox="0 0 17 17"><Obs /><circle cx="4" cy="13" r="4" fill="#d3202c" /></svg></TrayItem>
      <TrayItem><Mic size={11} color="#2878c0" /></TrayItem>
      <Wifi size={12} />
      <Volume2 size={11} strokeWidth={1.5} />
      <Icon w={11} h={8} viewBox="0 0 11 8"><path d="M3 2h6.500v5H3zM10.500 3.500v2" fill="#222" /><path d="M1 0v3h2.500V0M2 3v4" /></Icon>
      <Clock>6:05 PM<br />12/1/2021</Clock>
      <Badge>2</Badge>
    </Tray>
  </Taskbar>
);

const StatusBar = () => (
  <Status>
    <StatusText>Slide 29 of 62</StatusText>
    <StatusButton aria-label="Spelling">
      <Icon w={10} viewBox="0 0 10 10"><path d="M4.500 1.500H1v7h4l.5 1 .5-1h3M5 2v7M6.500 1.500h3v2l-3 3h3V4" strokeWidth=".8" /></Icon>
    </StatusButton>
    <Spacer />
    <StatusButton $after={12}>
      <Icon w={9} viewBox="0 0 9 9"><path d="M.5 4.500h8M.5 6.500h8M.5 8.500h8M3 2.500h3L4.500 1z" strokeWidth=".8" /></Icon>
      Notes
    </StatusButton>
    <StatusButton $after={13}>
      <Icon w={9} viewBox="0 0 9 9"><path d="M0 1h9v5.500H4L2 8.500v-2H0z" fill="#555" stroke="none" /></Icon>
      Comments
    </StatusButton>
    <StatusButton $width={27} $active aria-label="Normal"><Icon w={9} viewBox="0 0 9 9"><path d="M.5.5h8v8h-8zM2.500.5v8M4 3h3M4 5h3M2.500 6.500h6" strokeWidth=".8" /></Icon></StatusButton>
    <StatusButton $width={26} aria-label="Slide sorter"><Icon w={9} viewBox="0 0 9 9"><path d="M.5.500h3v3h-3zM5.500.500h3v3h-3zM.5 5.500h3v3h-3zM5.500 5.500h3v3h-3z" strokeWidth=".8" /></Icon></StatusButton>
    <StatusButton $width={26} aria-label="Reading view"><Icon w={9} viewBox="0 0 9 9"><path d="M.5 1h3l1 1 1-1h3v6.500h-3l-1 1-1-1h-3zM4.500 2v6M6 3h1.500M6 5h1.500" strokeWidth=".8" /></Icon></StatusButton>
    <StatusButton $width={27} aria-label="Slide show"><Icon w={9} viewBox="0 0 9 9"><path d="M0 1h9M1 1v4h7V1M4.500 5v3M2.500 8.500h4" strokeWidth=".8" /></Icon></StatusButton>
    <StatusButton $width={10} $after={1} aria-label="Zoom out"><Icon w={6} viewBox="0 0 6 6"><path d="M0 3h6" /></Icon></StatusButton>
    <Zoom type="range" min="10" max="208" defaultValue="109" aria-label="Zoom" />
    <StatusButton $width={10} aria-label="Zoom in"><Icon w={6} viewBox="0 0 6 6"><path d="M0 3h6M3 0v6" /></Icon></StatusButton>
    <ZoomValue>109%</ZoomValue>
    <StatusButton $after={4} aria-label="Fit slide"><Icon w={9} viewBox="0 0 9 9"><path d="M.5.500h8v8h-8zM4.500.500v3M4.500 5.500v3M.5 4.500h3M5.500 4.500h3" strokeWidth=".8" /></Icon></StatusButton>
  </Status>
);

const App = () => (
  <Page>
    <GlobalStyle />
    <TopBar />
    <Ribbon>
      <ClipboardGroup />
      <SlidesGroup />
      <FontGroup />
      <ParagraphGroup />
      <DrawingGroup />
      <EditingGroup />
      <RibbonEnd><Icon w={10} viewBox="0 0 10 10"><path d="m1 3 4 4 4-4" strokeWidth="1.200" /></Icon></RibbonEnd>
    </Ribbon>
    <QuickAccess>
      <QuickButton $width={10} $tint="#7446a0" aria-label="Save"><Icon w={10} viewBox="0 0 10 10"><path d="M.6.600h8.800v8.800H.6zM2 .6v3.500h6V.6M3 9.400V6.500h4v2.900" /></Icon></QuickButton>
      <QuickButton $width={37} $tint="#3b75af" aria-label="Undo"><Undo2 size={11} strokeWidth={3} /><Caret /></QuickButton>
      <QuickButton $width={10} $tint="#3b75af" aria-label="Redo"><Redo2 size={11} strokeWidth={3} /></QuickButton>
      <QuickButton $width={28} aria-label="From beginning"><Icon w={11} viewBox="0 0 11 11"><path d="M0 1h11M1 1v6h4M10 1v2M4 7l-1 3M5 7v2" strokeWidth=".8" /><circle cx="7.500" cy="6" r="2.700" strokeWidth=".8" /><path d="M7 5v2l1.500-1z" strokeWidth=".6" /></Icon></QuickButton>
      <QuickButton $width={10} aria-label="Customize toolbar"><Icon w={5} viewBox="0 0 5 5"><path d="M.5.500h4" /><path d="M.5 2.500h4l-2 2z" fill="#333" stroke="none" /></Icon></QuickButton>
    </QuickAccess>
    <Workspace>
      <SlideList />
      <Scroll>
        <ScrollButton aria-label="Scroll up"><Triangle up /></ScrollButton>
        <Track $grow={166} $tone="#d2d2d2" />
        <Handle $grow={195} />
        <Track $grow={163} $tone="#d2d2d2" />
        <ScrollButton aria-label="Scroll down"><Triangle /></ScrollButton>
      </Scroll>
      <Canvas>
        <Slide>
          <SlideHeading $tint="#96b81f">Information Theory &amp; Coding</SlideHeading>
          <SlideHeading $tint="#3d6d2a">Convolutional Code</SlideHeading>
          <SlideInk />
        </Slide>
      </Canvas>
      <Scroll>
        <ScrollButton aria-label="Previous"><Triangle up /></ScrollButton>
        <Track $grow={218} $tone="#dcdcdc" />
        <Handle />
        <Track $grow={257} $tone="#dcdcdc" />
        <ScrollButton aria-label="Next"><Triangle /></ScrollButton>
        <ScrollButton $plain aria-label="Previous slide"><Icon w={6} viewBox="0 0 6 6"><path d="M1 3h4L3 .5zM1 6h4L3 3.500z" fill="#444" stroke="none" /></Icon></ScrollButton>
        <ScrollButton $plain aria-label="Next slide"><Icon w={6} viewBox="0 0 6 6"><path d="M1 0h4L3 2.500zM1 3h4L3 5.500z" fill="#444" stroke="none" /></Icon></ScrollButton>
        <Track $grow={14} $tone="transparent" />
      </Scroll>
    </Workspace>
    <StatusBar />
    <BottomBar />
  </Page>
);

export default App;
